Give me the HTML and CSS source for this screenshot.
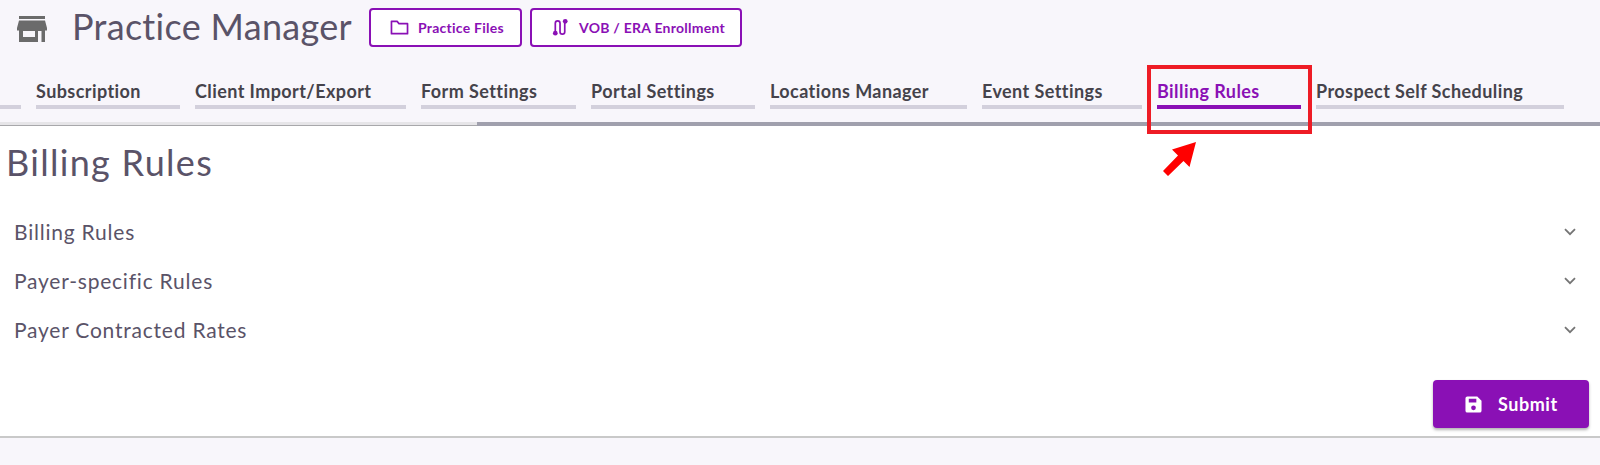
FILE: index.html
```html
<!DOCTYPE html>
<html lang="en">
<head>
<meta charset="utf-8">
<title>Practice Manager</title>
<link rel="stylesheet" href="styles.css">
</head>
<body>
<header class="header">
  <svg class="store" viewBox="0 0 30 26" width="30" height="26"><path fill="#6b6b6b" d="M2 0h26v3H2zM2 4.500h26l2 7.500v2.500h-2V26H2V14.500H0V12zM6 15v6h12v-6zM21 15v11h3.500V15z" fill-rule="evenodd"/></svg>
  <h1 class="title">Practice Manager</h1>
  <a class="btn btn-files">
    <svg viewBox="0 0 20 18" width="19" height="17"><path fill="none" stroke="currentColor" stroke-width="1.800" d="M1.500 15.500V2.500h6l2 2.500h9v10.500z" stroke-linejoin="round"/></svg>
    <span>Practice Files</span>
  </a>
  <a class="btn btn-vob">
    <svg viewBox="0 0 18 20" width="17" height="19"><path fill="none" stroke="currentColor" stroke-width="1.800" d="M3.500 14V5.500a2.500 2.500 0 0 1 5 0v9a2.500 2.500 0 0 0 5 0V5"/><circle cx="3.500" cy="16" r="2.500" fill="currentColor"/><circle cx="14" cy="3.500" r="2.500" fill="currentColor"/></svg>
    <span>VOB / ERA Enrollment</span>
  </a>
</header>
<nav class="tabs">
  <div class="tab"></div>
  <div class="tab">Subscription</div>
  <div class="tab">Client Import/Export</div>
  <div class="tab">Form Settings</div>
  <div class="tab">Portal Settings</div>
  <div class="tab">Locations Manager</div>
  <div class="tab">Event Settings</div>
  <div class="tab active">Billing Rules</div>
  <div class="tab">Prospect Self Scheduling</div>
</nav>
<div class="scrollbar"><div class="thumb"></div></div>
<main class="panel">
  <h2 class="heading">Billing Rules</h2>
  <div class="row"><span>Billing Rules</span><svg class="chev" viewBox="0 0 12 8" width="12" height="8"><path d="M1 1.200l5 5 5-5" fill="none" stroke="#757575" stroke-width="1.800"/></svg></div>
  <div class="row"><span>Payer-specific Rules</span><svg class="chev" viewBox="0 0 12 8" width="12" height="8"><path d="M1 1.200l5 5 5-5" fill="none" stroke="#757575" stroke-width="1.800"/></svg></div>
  <div class="row"><span>Payer Contracted Rates</span><svg class="chev" viewBox="0 0 12 8" width="12" height="8"><path d="M1 1.200l5 5 5-5" fill="none" stroke="#757575" stroke-width="1.800"/></svg></div>
  <div class="actions">
    <button class="submit">
      <svg viewBox="0 0 18 18" width="17" height="17"><path fill="#fff" fill-rule="evenodd" d="M2.500 0.500H13l4.500 4.500v10.500a2 2 0 0 1-2 2h-13a2 2 0 0 1-2-2v-13a2 2 0 0 1 2-2zM4 3v4h8V3zM9 10a2.500 2.500 0 1 0 0 5 2.500 2.500 0 0 0 0-5z"/></svg>
      <span>Submit</span>
    </button>
  </div>
</main>
<div class="callout"></div>
<svg class="arrow" viewBox="0 0 36 36" width="36" height="36"><path fill="#ff0000" d="M34 1L27.500 26 21.500 20 6 35 1 30 16 14.500 10 8.500z"/></svg>
</body>
</html>
```
FILE: styles.css
```css
* { box-sizing: border-box; }
html, body { margin: 0; padding: 0; }
body {
  background: #f8f6fb;
  font-family: "Lato", "Noto Sans", sans-serif;
  height: 465px;
  overflow: hidden;
  position: relative;
}
.header {
  display: flex;
  align-items: center;
  height: 55px;
  padding-left: 17px;
}
.store { margin: 2px 25px 0 0; }
.title {
  margin: 0 18px 4px 0;
  width: 279px;
  font-size: 36px;
  letter-spacing: .3px;
  font-weight: 400;
  color: #5a5368;
  white-space: nowrap;
}
.btn {
  display: flex;
  align-items: center;
  height: 39px;
  margin-right: 8px;
  border: 2px solid #8a10b5;
  border-radius: 4px;
  background: #fff;
  color: #8a10b5;
  font-size: 14px;
  letter-spacing: .25px;
  font-weight: 700;
  white-space: nowrap;
}
.btn-files { width: 153px; padding-left: 19px; gap: 9px; }
.btn-vob { width: 212px; padding-left: 20px; gap: 10px; }
.tabs {
  display: grid;
  grid-template-columns: 21px 144px 211px 155px 164px 197px 160px 144px 248px;
  column-gap: 15px;
  height: 67px;
  padding-top: 25px;
}
.tab {
  height: 29px;
  border-bottom: 4px solid #d3d0dc;
  color: #45434b;
  font-size: 18px;
  letter-spacing: .42px;
  font-weight: 700;
  line-height: 23px;
  white-space: nowrap;
}
.tab.active { color: #8a10b5; border-bottom-color: #8a10b5; }
.scrollbar {
  height: 4px;
  background: #e6e5e8;
  border-bottom: 1px solid #a8a8ab;
  display: flex;
  justify-content: flex-end;
}
.thumb { width: 1123px; height: 4px; background: #a0a0ad; }
.panel {
  height: 312px;
  background: #fff;
  border-bottom: 2px solid #c9c9c9;
  padding: 16px 11px 0 0;
}
.heading {
  margin: 0 0 25px 6px;
  font-size: 36px;
  letter-spacing: 1.3px;
  font-weight: 400;
  line-height: 40px;
  color: #5a5368;
}
.row {
  display: flex;
  align-items: center;
  justify-content: space-between;
  height: 49px;
  padding: 0 13px 0 14px;
  font-size: 21px;
  letter-spacing: .78px;
  color: #5a5368;
}
.actions {
  display: flex;
  justify-content: flex-end;
  margin-top: 26px;
}
.submit {
  display: flex;
  align-items: center;
  gap: 16px;
  width: 156px;
  height: 48px;
  padding: 0 0 0 32px;
  border: 0;
  border-radius: 4px;
  background: #8a10b5;
  box-shadow: 0 2px 3px rgba(0,0,0,.3);
  color: #fff;
  font: 700 18px "Lato", "Noto Sans", sans-serif;
  letter-spacing: .55px;
}
.callout {
  position: absolute;
  left: 1147px;
  top: 65px;
  width: 165px;
  height: 69px;
  border: 4px solid #ee1c25;
}
.arrow {
  position: absolute;
  left: 1162px;
  top: 141px;
}
```
